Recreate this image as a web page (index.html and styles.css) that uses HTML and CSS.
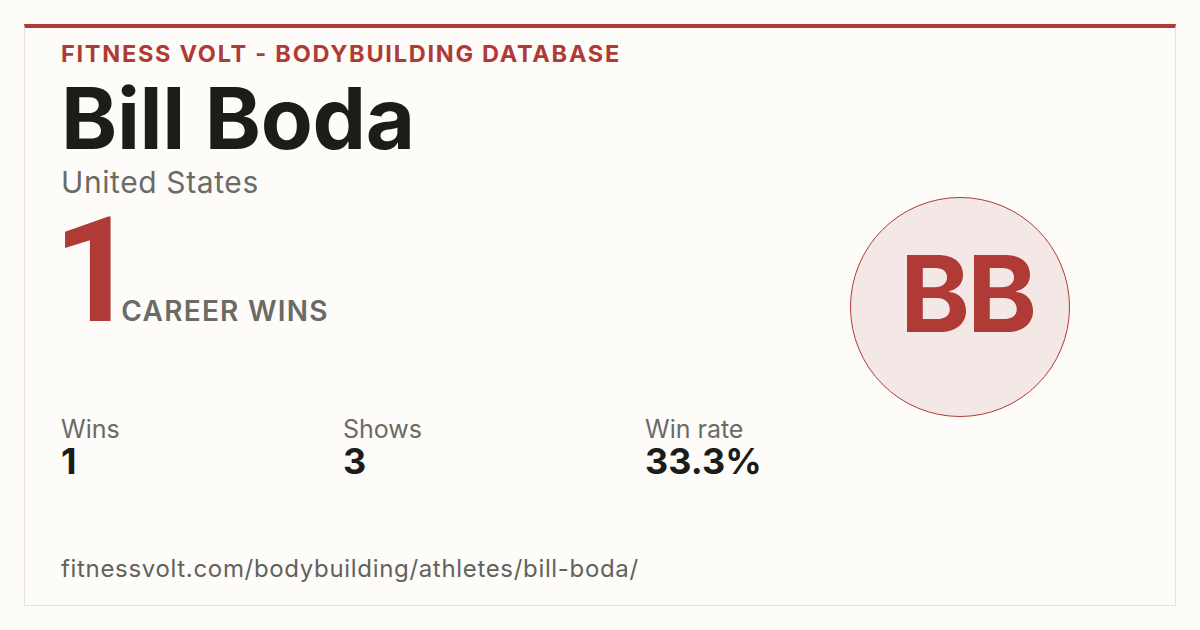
FILE: index.html
```html
<!DOCTYPE html>
<html lang="en">
<head>
<meta charset="utf-8">
<title>Bill Boda - Fitness Volt</title>
<link rel="stylesheet" href="styles.css">
</head>
<body>
<div class="card">
  <div class="main">
    <div class="eyebrow">FITNESS VOLT - BODYBUILDING DATABASE</div>
    <h1 class="name">Bill Boda</h1>
    <div class="country">United States</div>
    <div class="wins-row">
      <span class="wins-big">1</span>
      <span class="wins-label">CAREER WINS</span>
    </div>
    <div class="stats">
      <div class="stat">
        <div class="stat-label">Wins</div>
        <div class="stat-value">1</div>
      </div>
      <div class="stat">
        <div class="stat-label">Shows</div>
        <div class="stat-value">3</div>
      </div>
      <div class="stat">
        <div class="stat-label">Win rate</div>
        <div class="stat-value">33.3%</div>
      </div>
    </div>
    <div class="url">fitnessvolt.com/bodybuilding/athletes/bill-boda/</div>
  </div>
  <div class="avatar">
    <span class="initials">BB</span>
  </div>
</div>
</body>
</html>
```

FILE: styles.css
```css
* { box-sizing: border-box; }

html, body {
  margin: 0;
  padding: 0;
  background: #fdfcf7;
}

body {
  padding: 24px;
  font-family: Inter, "DejaVu Sans", sans-serif;
  color: #1c1c1a;
}

.card {
  height: 582px;
  background: #fdfcf8;
  border: 1px solid #e4e1d9;
  border-top: 4px solid #b03a35;
  display: flex;
  align-items: stretch;
}

.main {
  flex: 1;
  display: flex;
  flex-direction: column;
  padding: 11px 0 21px 36px;
}

.eyebrow {
  font-size: 23.5px;
  line-height: 30px;
  font-weight: 700;
  letter-spacing: 0.074em;
  color: #b03a35;
}

.name {
  margin: 4px 0 0;
  font-size: 85px;
  line-height: 92px;
  font-weight: 700;
  letter-spacing: -0.004em;
  color: #1c1c1a;
}

.country {
  font-size: 30px;
  line-height: 34px;
  letter-spacing: 0.02em;
  color: #6b6b66;
}

.wins-row {
  margin-top: 17px;
  display: flex;
  align-items: baseline;
  gap: 0;
}

.wins-big {
  font-family: Roboto, Inter, sans-serif;
  font-size: 147px;
  line-height: 110px;
  font-weight: 700;
  color: #b03a35;
  margin-left: -8px;
  margin-right: -16px;
}

.wins-label {
  font-size: 28px;
  font-weight: 600;
  color: #6b6b66;
  letter-spacing: 0.045em;
}

.stats {
  margin-top: 87px;
  display: grid;
  grid-template-columns: 282px 302px auto;
}

.stat-label {
  font-size: 25px;
  line-height: 28px;
  color: #6b6b66;
}

.stat-value {
  font-size: 36px;
  line-height: 36px;
  font-weight: 700;
  color: #1c1c1a;
}

.url {
  margin-top: auto;
  font-size: 24px;
  line-height: 30px;
  letter-spacing: 0.028em;
  color: #62625d;
}

.avatar {
  align-self: center;
  margin: 0 105px 19px 0;
  width: 220px;
  height: 220px;
  border-radius: 50%;
  border: 1.5px solid #b03a35;
  background: #f4e8e7;
  display: flex;
  align-items: center;
  justify-content: center;
  padding: 0 0 26px 14px;
}

.initials {
  font-size: 106px;
  line-height: 1;
  font-weight: 700;
  color: #b03a35;
  letter-spacing: -0.03em;
}
```
